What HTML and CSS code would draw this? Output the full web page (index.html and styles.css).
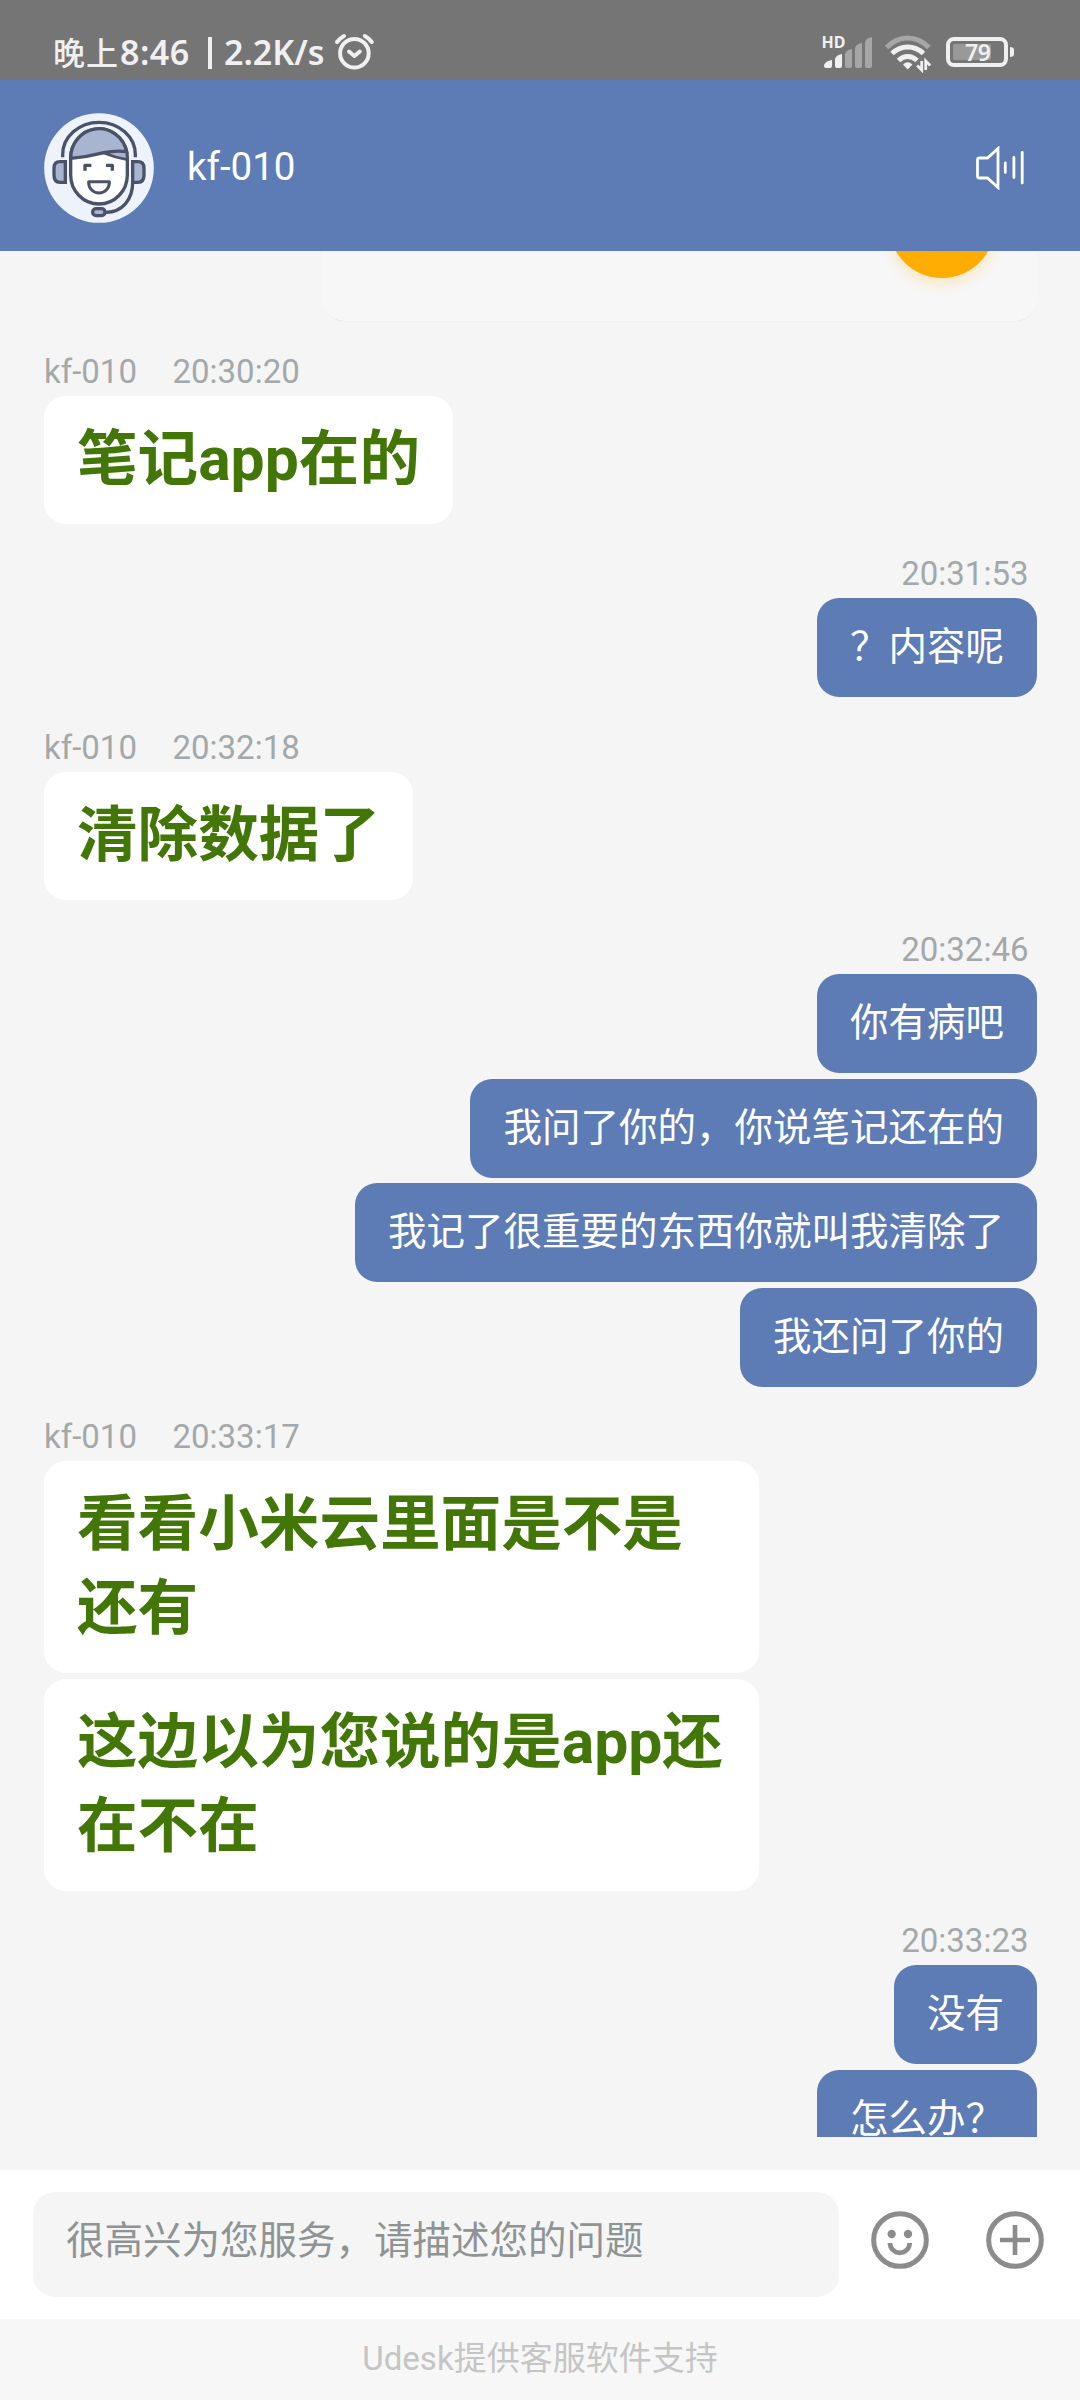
FILE: index.html
```html
<!DOCTYPE html>
<html lang="zh-CN">
<head>
<meta charset="utf-8">
<title>kf-010</title>
<link rel="stylesheet" href="styles.css">
</head>
<body>
<div class="status">
  <div class="status-left">
    <span class="daypart">晚上</span><span class="clock">8:46</span><span class="divider"></span><span class="speed">2.2K/s</span>
    <svg class="alarm" width="42" height="40" viewBox="334 33 42 40" fill="none" stroke="#f0f0f0" stroke-width="4" stroke-linecap="round" stroke-linejoin="round"><circle cx="354.4" cy="53.3" r="14.3"/><path d="M349 51.5l5.4 4.5 5.4-4.5M337 42q2.5-3.500 7-6M371.800 42q-2.500-3.500-7-6"/></svg>
  </div>
  <svg class="status-icons" width="200" height="44" viewBox="815 29 200 44" fill="#f0f0f0">
    <text class="hd" x="821.500" y="48" textLength="24">HD</text>
    <path d="M824 66v-1q1.500-4 8-5v6q0 2-2 2h-4q-2 0-2-2zM835 66v-7q1-4 7-5v12q0 2-2 2h-3q-2 0-2-2z"/>
    <path fill="#a6a6a6" d="M845 66v-12q1-4 7-5v17q0 2-2 2h-3q-2 0-2-2zM855 66v-18q1-4 7-5v23q0 2-2 2h-3q-2 0-2-2zM865 66v-24q1-4 7-5v29q0 2-2 2h-3q-2 0-2-2z"/>
    <g fill="none" stroke="#f0f0f0" stroke-width="5"><path stroke="#a6a6a6" d="M886.500 47.500Q896 38 907.700 38t21.300 9.500"/><path d="M892 53.500q7-6.500 15.700-6.500t15.800 6.500M898.500 60.500q4-4 9.200-4t9.300 4"/></g>
    <path d="M903 64.500q4.700-4.500 9.400 0l-4.700 5z"/>
    <path fill="none" stroke="#f0f0f0" stroke-width="2.800" d="M921.700 61v9l-4.500-4.500M925.700 70v-9l4.500 4.500"/>
    <rect x="948" y="39" width="58" height="26" rx="6" fill="none" stroke="#f0f0f0" stroke-width="4"/>
    <rect x="953" y="44" width="38" height="16" rx="2" fill="#999"/>
    <path d="M1010 47q4 0 4 3v4q0 3-4 3z"/>
    <text class="level" x="965" y="61" textLength="26">79</text>
  </svg>
</div>
<header class="header">
  <svg class="avatar" width="110" height="110" viewBox="42 38 330 330" fill="none" stroke="#4a5267" stroke-width="10">
    <circle cx="207" cy="203" r="164.500" fill="#eef2fb" stroke="none"/>
    <path d="M98 171v-8a109 97 0 0 1 218 0v8"/>
    <path fill="#fff" d="M122 174v50a85 87 0 0 0 170 0v-50a85 88 0 0 0-170 0z"/>
    <path fill="#a9b4d0" d="M122 174a85 88 0 0 1 168-20q-32-4-68 3-50 13-100 17z"/>
    <path fill="#a9b4d0" stroke-width="8" d="M222 158q34-8 68-3l2 23q-36-6-70-20z"/>
    <path fill="#a9b4d0" d="M106 184H90q-18 0-18 20v20q0 22 18 22h16zM308 184h16q18 0 18 20v20q0 22-18 22h-16z"/>
    <path d="M308 246c0 51-30 89-80 90"/>
    <rect x="188" y="325" width="37" height="21" rx="10" fill="#a9b4d0"/>
    <path fill="#fff" stroke-width="9" stroke-linejoin="round" d="M176 244h62v3a31 31 0 0 1-62 0z"/>
    <path stroke-width="10" stroke-linejoin="round" d="M165 211v-16h19M228 195h19v16"/>
  </svg>
  <h1 class="agent">kf-010</h1>
  <svg class="speaker" width="50" height="44" viewBox="975 147 50 44" fill="none" stroke="#fff" stroke-width="2.800"><path d="M977.500 161q0-2 2-2h8l10.500-9.500v39l-10.500-9.500h-8q-2 0-2-2z"/><path stroke-linecap="round" d="M1005.300 164v9.500M1013.900 158.500v20M1022.200 153.500v30.500"/></svg>
</header>
<main class="chat">
  <div class="card"><div class="orb"></div></div>
  <section class="group theirs">
    <div class="meta"><span>kf-010</span><time>20:30:20</time></div>
    <p class="bubble">笔记app在的</p>
  </section>
  <section class="group mine">
    <div class="meta"><time>20:31:53</time></div>
    <p class="bubble">？内容呢</p>
  </section>
  <section class="group theirs">
    <div class="meta"><span>kf-010</span><time>20:32:18</time></div>
    <p class="bubble">清除数据了</p>
  </section>
  <section class="group mine">
    <div class="meta"><time>20:32:46</time></div>
    <p class="bubble">你有病吧</p>
    <p class="bubble">我问了你的，你说笔记还在的</p>
    <p class="bubble">我记了很重要的东西你就叫我清除了</p>
    <p class="bubble">我还问了你的</p>
  </section>
  <section class="group theirs">
    <div class="meta"><span>kf-010</span><time>20:33:17</time></div>
    <p class="bubble">看看小米云里面是不是还有</p>
    <p class="bubble">这边以为您说的是app还在不在</p>
  </section>
  <section class="group mine">
    <div class="meta"><time>20:33:23</time></div>
    <p class="bubble">没有</p>
    <p class="bubble">怎么办？</p>
  </section>
</main>
<div class="composer">
  <input class="field" type="text" placeholder="很高兴为您服务，请描述您的问题">
  <svg class="face" width="58" height="58" viewBox="212 153 174 174" fill="none" stroke="#8c8c8c" stroke-width="15"><circle cx="299" cy="240" r="79"/><path stroke-width="14" d="M269 249a29.500 29.500 0 0 0 59 0"/><g fill="#8c8c8c" stroke="none"><circle cx="274" cy="222" r="12.500"/><circle cx="323" cy="222" r="12.500"/></g></svg>
  <svg width="58" height="58" viewBox="558 153 174 174" fill="none" stroke="#8c8c8c" stroke-width="15"><circle cx="645" cy="240" r="79"/><path stroke-width="14" d="M600 240h90M645 195v90"/></svg>
</div>
<footer class="footer">Udesk提供客服软件支持</footer>
</body>
</html>
```
FILE: styles.css
```css
* { box-sizing: border-box; }

body {
  margin: 0;
  height: 2400px;
  display: flex;
  flex-direction: column;
  overflow: hidden;
  background: #f5f5f5;
  font-family: Roboto, "Noto Sans CJK SC", sans-serif;
}

h1, p { margin: 0; font-weight: 400; }

svg { flex: none; display: block; }

.status {
  height: 80px;
  flex: none;
  display: flex;
  justify-content: space-between;
  align-items: flex-start;
  padding: 29px 65px 0 53px;
  background: #757575;
  color: #f0f0f0;
}

.status-left {
  display: flex;
  height: 40px;
  margin-top: 4px;
  line-height: 40px;
  font-family: "Noto Sans", "Noto Sans CJK SC", sans-serif;
  font-weight: 600;
  font-size: 34px;
  white-space: nowrap;
}

.daypart {
  width: 67px;
  font-family: "Noto Sans CJK SC", sans-serif;
  font-size: 32px;
  font-weight: 500;
  line-height: 37px;
  letter-spacing: 1px;
}

.clock { width: 88px; line-height: 39px; letter-spacing: 0.5px; }

.divider { width: 4px; height: 32px; margin: 4px 12px 0 0; background: #f0f0f0; }

.speed { width: 110px; line-height: 39px; letter-spacing: 0; }

.hd { font: 700 16px "Noto Sans", sans-serif; }

.level { font: 600 23px "Noto Sans", sans-serif; }

.header {
  height: 171px;
  flex: none;
  display: flex;
  align-items: center;
  padding: 4px 55px 0 44px;
  background: #5d7bb4;
  color: #fff;
}

.agent { flex: 1; margin: -2px 0 0 33px; font-size: 38.5px; }

.chat {
  height: 1886px;
  flex: none;
  overflow: hidden;
  padding: 0 43px 0 44px;
}

.card {
  width: 715px;
  height: 70.4px;
  margin-left: auto;
  padding-right: 42px;
  overflow: hidden;
  border-radius: 0 0 22px 22px;
  background: #f7f7f7;
  box-shadow: 0 1px 1px -1px #ccd0dc;
}

.orb {
  width: 106px;
  height: 106px;
  margin: -79px 0 0 auto;
  border-radius: 50%;
  background: #ffad02;
  box-shadow: 0 6px 14px rgba(255, 173, 2, 0.22);
}

.group { display: flex; flex-direction: column; align-items: flex-start; }

.mine { align-items: flex-end; }

.meta {
  display: flex;
  gap: 35.5px;
  margin: 30.4px 0 5px;
  line-height: 39px;
  font-size: 33px;
  color: #a3a8aa;
}

.mine .meta { padding-right: 8.5px; }

.bubble {
  padding: 22px 33px;
  border-radius: 22px;
  white-space: nowrap;
  background: #fff;
  color: #427707;
  font-size: 60.6px;
  font-weight: 700;
  line-height: 84px;
}

.bubble + .bubble { margin-top: 5.7px; }

.theirs .bubble { max-width: 715px; white-space: normal; }

.mine .bubble {
  height: 99px;
  padding: 22px 33px 0;
  background: #5d7bb4;
  color: #fff;
  font-size: 38.5px;
  font-weight: 400;
  line-height: 54px;
}

.composer {
  height: 149px;
  flex: none;
  display: flex;
  align-items: center;
  margin-top: 33px;
  padding: 0 36px 0 33px;
  background: #fff;
}

.composer svg { margin-top: -9px; }

.field {
  width: 806px;
  height: 105px;
  margin: 0;
  padding: 0 33px 9px;
  border: 0;
  border-radius: 22px;
  background: #f5f5f5;
  font: 38.5px Roboto, "Noto Sans CJK SC", sans-serif;
}

.field::placeholder { color: #8e9394; opacity: 1; }

.face { margin-left: 31.5px; margin-right: auto; }

.footer {
  height: 81px;
  flex: none;
  background: #f7f7f7;
  color: #c5c5c5;
  font-size: 33px;
  line-height: 79px;
  text-align: center;
}
```
